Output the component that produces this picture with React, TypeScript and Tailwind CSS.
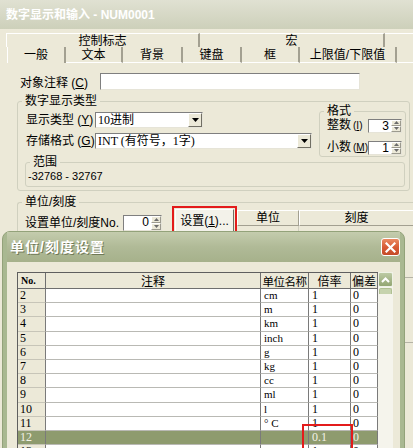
import React from "react";

const rows = [
  { no: "2", unit: "cm", rate: "1", off: "0" },
  { no: "3", unit: "m", rate: "1", off: "0" },
  { no: "4", unit: "km", rate: "1", off: "0" },
  { no: "5", unit: "inch", rate: "1", off: "0" },
  { no: "6", unit: "g", rate: "1", off: "0" },
  { no: "7", unit: "kg", rate: "1", off: "0" },
  { no: "8", unit: "cc", rate: "1", off: "0" },
  { no: "9", unit: "ml", rate: "1", off: "0" },
  { no: "10", unit: "l", rate: "1", off: "0" },
  { no: "11", unit: "° C", rate: "1", off: "0" },
  { no: "12", unit: "", rate: "0.1", off: "0", sel: true },
  { no: "13", unit: "", rate: "1", off: "0" },
];

const tabs = [
  { label: "一般", w: "w-[59px]", active: true },
  { label: "文本", w: "w-[57px]" },
  { label: "背景", w: "w-[60px]" },
  { label: "键盘", w: "w-[59px]" },
  { label: "框", w: "w-[58px]" },
  { label: "上限值/下限值", w: "w-[97px]" },
];

function Spin({ value, className }: { value: string; className: string }) {
  return (
    <div className={`shrink-0 flex bg-white border border-[#7f7f7f] border-r-[#e6e4d8] border-b-[#e6e4d8] ${className}`}>
      <div className="flex-1 text-right pr-[2px] text-[12px] leading-[13px]">{value}</div>
      <div className="w-[10px] flex flex-col">
        <div className="flex-1 bg-[#ECE9D8] border border-white border-r-[#9c9a8e] border-b-[#9c9a8e] flex items-center justify-center">
          <svg width="5" height="3" viewBox="0 0 5 3">
            <path d="M2.5 0L5 3H0z" fill="#6b6b6b" />
          </svg>
        </div>
        <div className="flex-1 bg-[#ECE9D8] border border-white border-r-[#9c9a8e] border-b-[#9c9a8e] flex items-center justify-center">
          <svg width="5" height="3" viewBox="0 0 5 3">
            <path d="M0 0H5L2.5 3z" fill="#6b6b6b" />
          </svg>
        </div>
      </div>
    </div>
  );
}

function Combo({ text, className }: { text: string; className: string }) {
  return (
    <div className={`shrink-0 flex h-[16px] bg-white border border-[#7f7f7f] border-r-[#e6e4d8] border-b-[#e6e4d8] ${className}`}>
      <div className="flex-1 pl-[2px] leading-[14px] font-['Liberation_Serif','Noto_Sans_CJK_SC',serif]">{text}</div>
      <div className="w-[14px] bg-[#ECE9D8] border border-white border-r-[#716f64] border-b-[#716f64] flex items-center justify-center">
        <svg width="7" height="4" viewBox="0 0 7 4">
          <path d="M0 0H7L3.5 4z" fill="#000" />
        </svg>
      </div>
    </div>
  );
}

export default function App() {
  return (
    <div className="relative w-[413px] h-[448px] overflow-hidden whitespace-nowrap bg-[#ECE9D8] text-[12px] leading-[14px] text-black font-['Liberation_Sans','Noto_Sans_CJK_SC',sans-serif]">
      {/* window title */}
      <div className="h-[29px] flex items-center pl-[6px] bg-gradient-to-b from-[#e0e1d2] to-[#cdd0ba] text-white font-bold text-[12px]">
        数字显示和输入 - NUM0001
      </div>

      {/* tabs */}
      <div className="pt-[4px]">
        <div className="flex h-[14px] ml-[6px]">
          <div className="w-[194px] border-t border-l border-white border-r-2 border-r-[#a3a091] flex items-center justify-center">控制标志</div>
          <div className="w-[185px] border-t border-white border-r-2 border-r-[#a3a091] flex items-center justify-center">宏</div>
          <div className="flex-1 border-t border-white" />
        </div>
        <div className="flex h-[16px] ml-[7px]">
          {tabs.map((t) => (
            <div
              key={t.label}
              className={`${t.w} flex items-center justify-center border-r-2 border-r-[#a3a091] ${t.active ? "border-l border-l-white" : "border-b border-b-white"}`}
            >
              {t.label}
            </div>
          ))}
          <div className="flex-1 border-b border-white" />
        </div>
      </div>

      {/* panel */}
      <div className="pt-[10px]">
        <div className="flex items-center h-[17px]">
          <div className="w-[100px] pl-[20px] pt-[2px]">
            对象注释 (<u>C</u>)
          </div>
          <div className="w-[260px] h-[17px] bg-white border border-[#7f7f7f] border-r-[#e6e4d8] border-b-[#e6e4d8]" />
        </div>

        <fieldset className="mt-[3px] ml-[17px] w-[393px] border border-[#d0d0bf] rounded-[3px] pb-[3px]">
          <legend className="ml-[4px] px-[3px] leading-[16px]">数字显示类型</legend>
          <div className="flex">
            <div className="pt-[3px] pl-[8px] flex flex-col gap-[5px]">
              <div className="flex items-center">
                <div className="w-[69px] shrink-0">
                  显示类型 (<u>Y</u>)
                </div>
                <Combo text="10进制" className="w-[108px]" />
              </div>
              <div className="flex items-center">
                <div className="w-[69px] shrink-0">
                  存储格式 (<u>G</u>)
                </div>
                <Combo text="INT (有符号，1字)" className="w-[217px]" />
              </div>
            </div>
            <fieldset className="ml-[7px] -mt-[5px] w-[87px] border border-[#d0d0bf] rounded-[3px] pb-[1px]">
              <legend className="ml-[4px] px-[3px] leading-[14px]">格式</legend>
              <div className="flex flex-col gap-[7px] pl-[7px]">
                <div className="flex items-center">
                  <div className="w-[41px] shrink-0">
                    整数<span className="ml-[2px] text-[10px]">(<u>I</u>)</span>
                  </div>
                  <Spin value="3" className="w-[34px] h-[14px]" />
                </div>
                <div className="flex items-center">
                  <div className="w-[41px] shrink-0">
                    小数<span className="ml-[2px] text-[10px]">(<u>M</u>)</span>
                  </div>
                  <Spin value="1" className="w-[34px] h-[14px]" />
                </div>
              </div>
            </fieldset>
          </div>
          <fieldset className="-mt-[2px] ml-[7px] w-[380px] border border-[#d0d0bf] rounded-[3px] pb-[3px]">
            <legend className="ml-[4px] px-[3px] leading-[14px]">范围</legend>
            <div className="pl-[2px] text-[11px] leading-[14px]">-32768 - 32767</div>
          </fieldset>
        </fieldset>

        <fieldset className="mt-[4px] ml-[17px] w-[396px] h-[260px] border border-[#d0d0bf] border-r-0 rounded-l-[3px]">
          <legend className="ml-[4px] px-[3px] leading-[14px]">单位/刻度</legend>
          <div className="flex -mt-[3px]">
            <div className="w-[105px] shrink-0 pl-[7px] mt-[9px] leading-[16px]">设置单位/刻度No.</div>
            <Spin value="0" className="mt-[9px] w-[39px] h-[16px]" />
            <div className="shrink-0 ml-[10px] w-[65px] h-[29px] border-2 border-[#e31b1b] p-[1px]">
              <div className="w-full h-full bg-[#f3f2ea] border border-white border-r-[#716f64] border-b-[#716f64] flex items-center justify-center">
                设置(<u>1</u>)...
              </div>
            </div>
            <div className="mt-[4px] w-[176px] shrink-0 flex flex-col">
              <div className="flex h-[16px]">
                <div className="w-[62px] border border-white border-r-[#a3a091] border-b-[#a3a091] flex items-center justify-center">单位</div>
                <div className="flex-1 border border-white border-r-0 border-b-[#a3a091] flex items-center justify-center">刻度</div>
              </div>
              <div className="flex h-[52px]">
                <div className="w-[62px] border-r border-[#cfcdbf] border-b" />
                <div className="flex-1 border-b border-[#b5b3a6]" />
              </div>
              <div className="h-[65px] border-b border-[#b5b3a6]" />
            </div>
          </div>
        </fieldset>
      </div>

      {/* unit / scale settings dialog */}
      <div className="absolute left-[2px] top-[231px] w-[403px] h-[240px] rounded-t-[8px] bg-[#a9b891] border border-[#93a27a] px-[4px] flex flex-col">
        <div className="h-[30px] flex items-center justify-between pl-[3px] bg-gradient-to-b from-[#c4ccad] via-[#b0ba97] to-[#a6b18b]">
          <span className="text-white font-bold text-[14px] tracking-[1px] [text-shadow:1px_1px_0_#6f7957]">单位/刻度设置</span>
          <div className="w-[19px] h-[18px] rounded-[3px] border border-white bg-gradient-to-b from-[#ea8a62] via-[#d85c36] to-[#c44a28] flex items-center justify-center">
            <svg width="11" height="11" viewBox="0 0 11 11">
              <path d="M1.5 1.5L9.5 9.5M9.5 1.5L1.5 9.5" stroke="white" strokeWidth="2.2" strokeLinecap="square" />
            </svg>
          </div>
        </div>
        <div className="flex-1 bg-[#ECE9D8] pt-[10px] pl-[10px]">
          <div className="flex">
            <div className="grid grid-cols-[28px_215px_48px_42px_27px] border-l border-t border-[#5f5f5f] font-['Liberation_Serif','Noto_Sans_CJK_SC',serif]">
              <div className="h-[16px] border-r border-b border-[#6f6f6f] pl-[3px] text-[10px] font-bold leading-[16px]">No.</div>
              <div className="h-[16px] border-r border-b border-[#6f6f6f] text-center leading-[16px] font-['Noto_Sans_CJK_SC',sans-serif]">注释</div>
              <div className="h-[16px] border-r border-b border-[#6f6f6f] text-center leading-[16px] text-[11.5px] tracking-[-0.5px] overflow-hidden font-['Noto_Sans_CJK_SC',sans-serif]">单位名称</div>
              <div className="h-[16px] border-r border-b border-[#6f6f6f] text-center leading-[16px] font-['Noto_Sans_CJK_SC',sans-serif]">倍率</div>
              <div className="h-[16px] border-r border-b border-[#6f6f6f] text-center leading-[16px] overflow-hidden font-['Noto_Sans_CJK_SC',sans-serif]">偏差</div>
              {rows.map((r) => (
                <React.Fragment key={r.no}>
                  <div className={`h-[14.2px] border-r border-b border-r-[#7a7a7a] border-b-[#c7c5b8] pl-[2px] leading-[13px] ${r.sel ? "bg-[#8e9b6e] text-[#f2f2e6]" : "bg-[#ECE9D8]"}`}>{r.no}</div>
                  <div className={`h-[14.2px] border-r border-b border-r-[#7a7a7a] border-b-[#b9b9b4] ${r.sel ? "bg-[#8e9b6e]" : "bg-white"}`} />
                  <div className={`h-[14.2px] border-r border-b border-r-[#7a7a7a] border-b-[#b9b9b4] pl-[3px] leading-[13px] text-[11px] ${r.sel ? "bg-[#8e9b6e]" : "bg-white"}`}>{r.unit}</div>
                  <div className={`relative h-[14.2px] border-r border-b border-r-[#7a7a7a] border-b-[#b9b9b4] pl-[3px] leading-[13px] ${r.sel ? "bg-[#8e9b6e] text-[#f2f2e6]" : "bg-white"}`}>
                    {r.rate}
                    {r.sel && <div className="absolute -left-[7px] -top-[7px] w-[51px] h-[30px] border-2 border-[#e31b1b]" />}
                  </div>
                  <div className={`h-[14.2px] border-r border-b border-r-[#7a7a7a] border-b-[#b9b9b4] pl-[2px] leading-[13px] ${r.sel ? "bg-[#8e9b6e] text-[#f2f2e6]" : "bg-white"}`}>{r.off}</div>
                </React.Fragment>
              ))}
            </div>
            <div className="w-[15px] flex flex-col bg-[#f5f4ec]">
              <div className="h-[15px] rounded-[2px] border border-[#eef2e6] bg-gradient-to-b from-[#bccaa4] to-[#93a673] flex items-center justify-center">
                <svg width="9" height="6" viewBox="0 0 9 6">
                  <path d="M1 5L4.5 1.5L8 5" stroke="white" strokeWidth="2" fill="none" />
                </svg>
              </div>
              <div className="mt-[1px] mx-[1px] h-[6px] rounded-t-[2px] bg-[#c6d3ae] border border-[#b0c093] border-b-0" />
              <div className="flex-1" />
            </div>
          </div>
        </div>
      </div>
    </div>
  );
}
